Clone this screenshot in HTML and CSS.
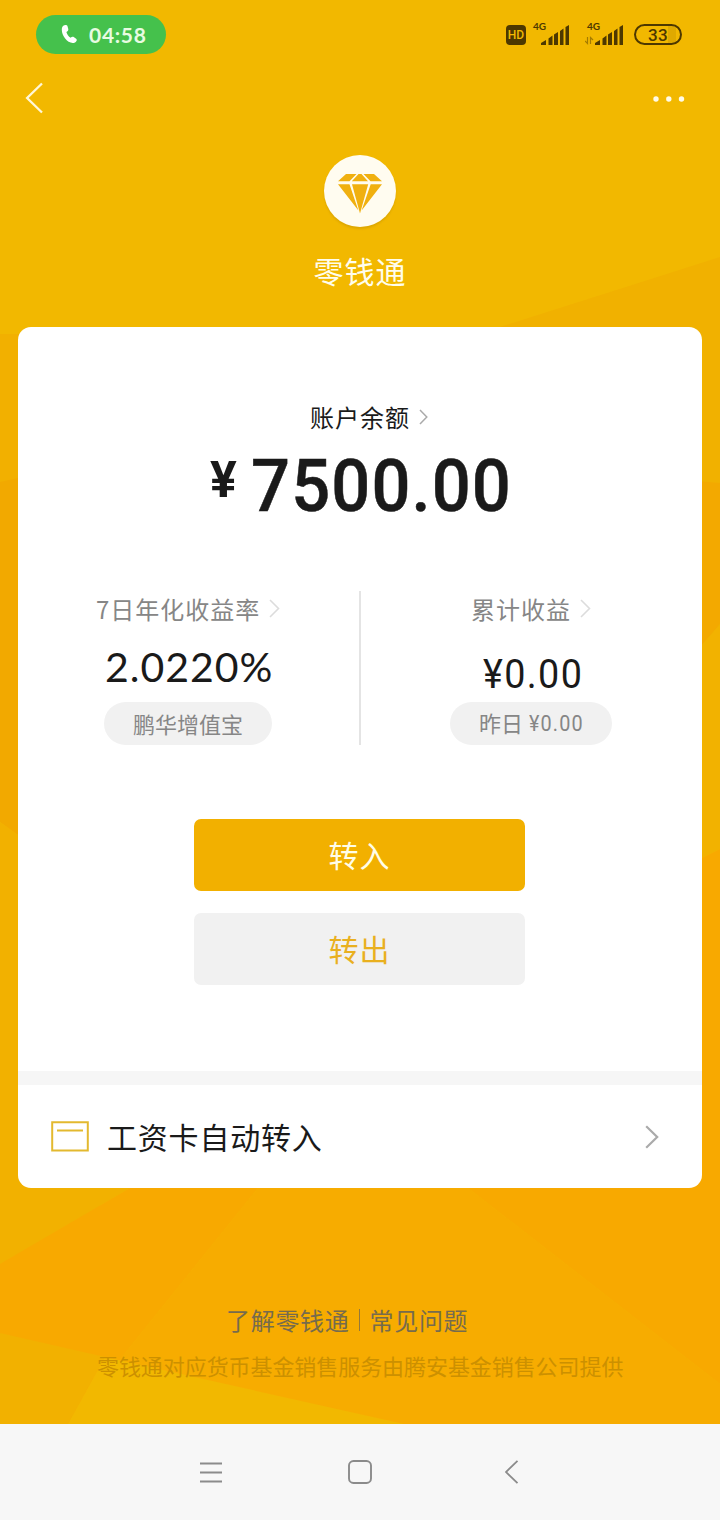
FILE: index.html
```html
<!DOCTYPE html>
<html lang="zh-CN">
<head>
<meta charset="utf-8">
<title>零钱通</title>
<link rel="stylesheet" href="styles.css">
</head>
<body>
<div class="screen">
  <svg class="backdrop" width="720" height="1424" viewBox="0 0 720 1424" aria-hidden="true">
    <rect width="720" height="1424" fill="#f2b800"/>
    <path d="M500 327L720 257V640H500Z" fill="#f1b100"/>
    <path d="M0 334H100V478L0 482Z" fill="#f2b000"/>
    <path d="M0 482L18 478H100V880L18 835L0 822Z" fill="#f2a900"/>
    <path d="M0 822L18 835L100 894V1220L0 1264Z" fill="#f2b100"/>
    <path d="M620 475L720 483V624L620 740Z" fill="#f3a900"/>
    <path d="M620 740L702 645L720 624V849L620 899Z" fill="#f2b200"/>
    <path d="M702 858L720 849V1384L468 1188V900Z" fill="#f8a900"/>
    <path d="M0 1264V1140H200L130 1188Z" fill="#f2b100"/>
    <path d="M130 1188H258L68 1424H0V1264Z" fill="#f8a900"/>
    <path d="M258 1188H468L720 1384V1424H68Z" fill="#f7ac00"/>
    <path d="M0 1333L105 1357L68 1424H0Z" fill="#f2b100"/>
    <path d="M105 1357L404 1424H68Z" fill="#f2b800"/>
  </svg>

  <header class="status">
    <div class="call">
      <svg width="17" height="21" viewBox="0 0 18 21"><path d="M2.4 1.3C4 .2 6.2.3 6.9 1.7L7.7 4.6C8 6 7 7.1 5.7 7.8C6.2 10 8 12.5 10.2 14C11.3 12.8 12.6 12.7 13.8 13.4L16 15C17.3 16.1 16.6 18 14.8 19C11.5 20.6 7.1 18.5 4.2 14.6C1 10.4-.5 3.8 2.4 1.3Z" fill="#fff"/></svg>
      <span>04:58</span>
    </div>
    <div class="signals">
      <span class="hd">HD</span>
      <div class="sim"><span>4G</span>
        <svg width="28" height="20" viewBox="0 0 28 20"><path d="M0 20V18L5 15V20ZM7.5 20V13.5L11.5 10.5V20ZM13 20V9.5L17 7V20ZM19 20V6L22.5 3.5V20ZM24.5 20V2L28 0V20Z" fill="#4d3800"/></svg>
      </div>
      <div class="sim sim-data"><span>4G</span>
        <svg width="38" height="20" viewBox="0 0 38 20"><path d="M10 20V18L15 15V20ZM17.5 20V13.5L21.5 10.5V20ZM23 20V9.5L27 7V20ZM29 20V6L32.5 3.5V20ZM34.5 20V2L38 0V20Z" fill="#4d3800"/><path d="M0 16L2.5 18.5V12M5.5 19V12.5L8 15" fill="none" stroke="#a47b00" stroke-width="1.2"/></svg>
      </div>
      <div class="battery">33</div>
    </div>
  </header>

  <nav class="topbar">
    <svg width="18" height="32" viewBox="0 0 18 32"><path d="M17 1.5L2.1 16L17 30.5" fill="none" stroke="#fff7d8" stroke-width="2.3"/></svg>
    <svg width="32" height="6" viewBox="0 0 32 6" fill="#fffbe8"><circle cx="3" cy="3" r="2.7"/><circle cx="15.8" cy="3" r="2.7"/><circle cx="28.5" cy="3" r="2.7"/></svg>
  </nav>

  <div class="brand">
    <div class="logo">
      <svg width="44" height="40" viewBox="0 0 44 40" fill="#f0b010"><path d="M8 0H18.5L11.5 7.3H0ZM20.5 0H23.5L30 7.3H13.8ZM25.5 0H36L44 7.3H32.5ZM0 10.3H11.5L20.4 36.5ZM14 10.3H30.2L22 39.5ZM32.7 10.3H44L23.6 36.5Z"/></svg>
    </div>
    <h1>零钱通</h1>
  </div>

  <main class="card">
    <div class="balance-label"><span>账户余额</span>
      <svg width="9" height="16" viewBox="0 0 9 16"><path d="M1 1L7.8 8L1 15" fill="none" stroke="#aaa" stroke-width="1.5"/></svg>
    </div>
    <div class="balance"><span class="yen">¥</span><span class="amount">7500.00</span></div>

    <div class="stats">
      <section class="stat stat-rate">
        <div class="stat-label"><span>7日年化收益率</span><svg width="11" height="19" viewBox="0 0 11 19"><path d="M1 1L9.5 9.5L1 18" fill="none" stroke="#dcdcdc" stroke-width="1.6"/></svg></div>
        <div class="rate">2.0220%</div>
        <div class="pill pill-fund">鹏华增值宝</div>
      </section>
      <div class="divider"></div>
      <section class="stat stat-income">
        <div class="stat-label"><span>累计收益</span><svg width="11" height="19" viewBox="0 0 11 19"><path d="M1 1L9.5 9.5L1 18" fill="none" stroke="#dcdcdc" stroke-width="1.6"/></svg></div>
        <div class="income">¥0.00</div>
        <div class="pill pill-day">昨日<span>¥0.00</span></div>
      </section>
    </div>

    <div class="actions">
      <button class="btn btn-in">转入</button>
      <button class="btn btn-out">转出</button>
    </div>

    <div class="auto">
      <svg width="38" height="31" viewBox="0 0 38 31"><path d="M1.2 1.2H36.8V29.6H1.2ZM6 9.5H32" fill="none" stroke="#e3b92f" stroke-width="2"/></svg>
      <span>工资卡自动转入</span>
      <svg class="auto-arrow" width="14" height="24" viewBox="0 0 14 24"><path d="M1.2 1.2L12.2 12L1.2 22.8" fill="none" stroke="#aaa" stroke-width="2.2"/></svg>
    </div>
  </main>

  <footer class="foot">
    <div class="links"><span>了解零钱通</span><i></i><span>常见问题</span></div>
    <p>零钱通对应货币基金销售服务由腾安基金销售公司提供</p>
  </footer>

  <div class="sysnav">
    <svg width="22" height="21" viewBox="0 0 22 21"><path d="M0 1.5H22M0 10.5H22M0 19.5H22" stroke="#8b8b8b" stroke-width="1.9"/></svg>
    <svg width="24" height="24" viewBox="0 0 24 24"><rect x="1" y="1" width="22" height="22" rx="4.5" fill="none" stroke="#8b8b8b" stroke-width="1.9"/></svg>
    <svg width="14" height="24" viewBox="0 0 14 24"><path d="M12.5 .8L1 12L12.5 23.2" fill="none" stroke="#8b8b8b" stroke-width="1.8"/></svg>
  </div>
</div>
</body>
</html>
```

FILE: styles.css
```css
* { box-sizing: border-box; }
body { margin: 0; font-family: "Noto Sans CJK SC", sans-serif; color: #1a1a1a; }
svg { display: block; flex: none; }
.screen { position: relative; isolation: isolate; width: 720px; height: 1520px; display: flex; flex-direction: column; overflow: hidden; }
.backdrop { position: absolute; inset: 0; z-index: -1; }

.status { height: 70px; padding: 15px 38px 0 36px; display: flex; justify-content: space-between; }
.call { width: 130px; height: 39px; border-radius: 20px; background: #45c14c; color: #e8fbe2; display: flex; align-items: center; padding-left: 25px; gap: 11px; font: 700 21px/39px Lato, sans-serif; letter-spacing: .7px; }
.signals { display: flex; height: 39px; color: #4d3800; }
.hd { width: 20px; height: 20px; margin: 10px 7px 0 0; border-radius: 4px; background: #4d3800; color: #f2b800; font: 500 12px/21px Roboto, sans-serif; text-align: center; }
.sim { width: 36px; height: 20px; margin-top: 10px; padding-left: 8px; position: relative; }
.sim span { position: absolute; left: 0; top: -5px; font: 700 10px/12px Lato, sans-serif; }
.sim-data { margin-left: 16px; width: 38px; padding-left: 0; }
.sim-data span { left: 2px; }
.battery { width: 48px; height: 21px; margin: 9px 0 0 11px; border: 2px solid #4d3800; border-radius: 11px; background: linear-gradient(90deg, transparent 32px, #dfa900 32px, #dfa900 40px, transparent 40px); font: 500 17px/18px Roboto, sans-serif; text-align: center; letter-spacing: .3px; }

.topbar { height: 85px; padding: 12px 35px 0 25px; display: flex; justify-content: space-between; align-items: flex-start; }
.topbar svg:last-child { margin-top: 14px; }

.brand { height: 172px; display: flex; flex-direction: column; align-items: center; }
.logo { width: 72px; height: 72px; border-radius: 50%; background: #fffcf0; box-shadow: 0 2px 2px #b8860055; padding: 19px 0 0 14px; }
.brand h1 { margin: 21px 0 0; color: #fffdec; font-size: 30px; font-weight: 400; line-height: 44px; letter-spacing: 1px; }

.card { width: 684px; height: 861px; margin: 0 18px; border-radius: 13px; background: #fff; display: flex; flex-direction: column; overflow: hidden; }
.balance-label { height: 36px; margin: 72px 0 0 292px; display: flex; align-items: center; gap: 9px; font-size: 24px; line-height: 36px; letter-spacing: 1px; }
.balance { height: 102px; padding-left: 192px; display: flex; font-family: Roboto, sans-serif; font-weight: 500; }
.yen { width: 41px; font-size: 50px; font-weight: 700; line-height: 90px; }
.amount { font-size: 73px; line-height: 103px; letter-spacing: 1.2px; -webkit-text-stroke: .5px #1a1a1a; transform: scaleX(.94); transform-origin: left; }

.stats { height: 155px; margin-top: 54px; display: flex; }
.stat { display: flex; flex-direction: column; }
.stat-rate { width: 341px; padding-left: 78px; }
.stat-income { padding-left: 89px; }
.divider { width: 2px; height: 154px; background: #e4e4e4; }
.stat-label { height: 36px; display: flex; align-items: center; gap: 9px; color: #868686; font-size: 24px; line-height: 36px; letter-spacing: 1px; font-weight: 400; }
.stat-label svg { margin-top: -2px; }
.stat-income .stat-label { padding-left: 21px; }
.rate { height: 75px; padding-left: 9px; font: 400 41px/80px Lato, sans-serif; letter-spacing: 1px; }
.income { height: 75px; margin-left: 33px; font: 400 41px/95px Roboto, sans-serif; letter-spacing: 1.5px; transform: scaleX(.92); transform-origin: left; }
.pill { height: 43px; border-radius: 22px; background: #f1f1f1; color: #868686; font-size: 22px; line-height: 43px; font-weight: 400; }
.pill-fund { width: 168px; margin-left: 8px; padding-left: 29px; }
.pill-day { width: 162px; padding-left: 29px; display: flex; gap: 6px; line-height: 41px; }
.pill-day span { font-family: Roboto, sans-serif; line-height: 43px; letter-spacing: 1.3px; transform: scaleX(.9); transform-origin: left; }

.actions { margin: 73px 0 0 176px; display: flex; flex-direction: column; gap: 22px; }
.btn { width: 331px; height: 72px; border: 0; border-radius: 7px; padding: 0 0 1px; font: 400 30px/71px "Noto Sans CJK SC", sans-serif; letter-spacing: 1px; }
.btn-in { background: #f2b000; color: #fffde8; }
.btn-out { background: #f1f1f1; color: #e9b01f; }
.auto { height: 117px; margin-top: 86px; padding: 0 43px 0 33px; border-top: 14px solid #f6f6f6; display: flex; align-items: center; font-size: 30px; letter-spacing: .8px; }
.auto span { margin-left: 18px; padding-bottom: 2px; }
.auto-arrow { margin-left: auto; }

.foot { height: 236px; padding-top: 114px; }
.links { height: 36px; padding-left: 226px; display: flex; align-items: center; color: #766b4d; font-size: 24px; line-height: 36px; letter-spacing: .7px; }
.links i { width: 1px; height: 22px; margin: 0 10px 0 9px; background: #94783a; }
.foot p { margin: 10px 0 0 97px; color: #cc9000; font-size: 22px; font-weight: 400; line-height: 34px; letter-spacing: -.07px; white-space: nowrap; }
.sysnav { height: 96px; background: #f7f7f7; padding: 0 201px 0 200px; display: grid; grid-template-columns: 148px 1fr 14px; align-items: center; }
```
